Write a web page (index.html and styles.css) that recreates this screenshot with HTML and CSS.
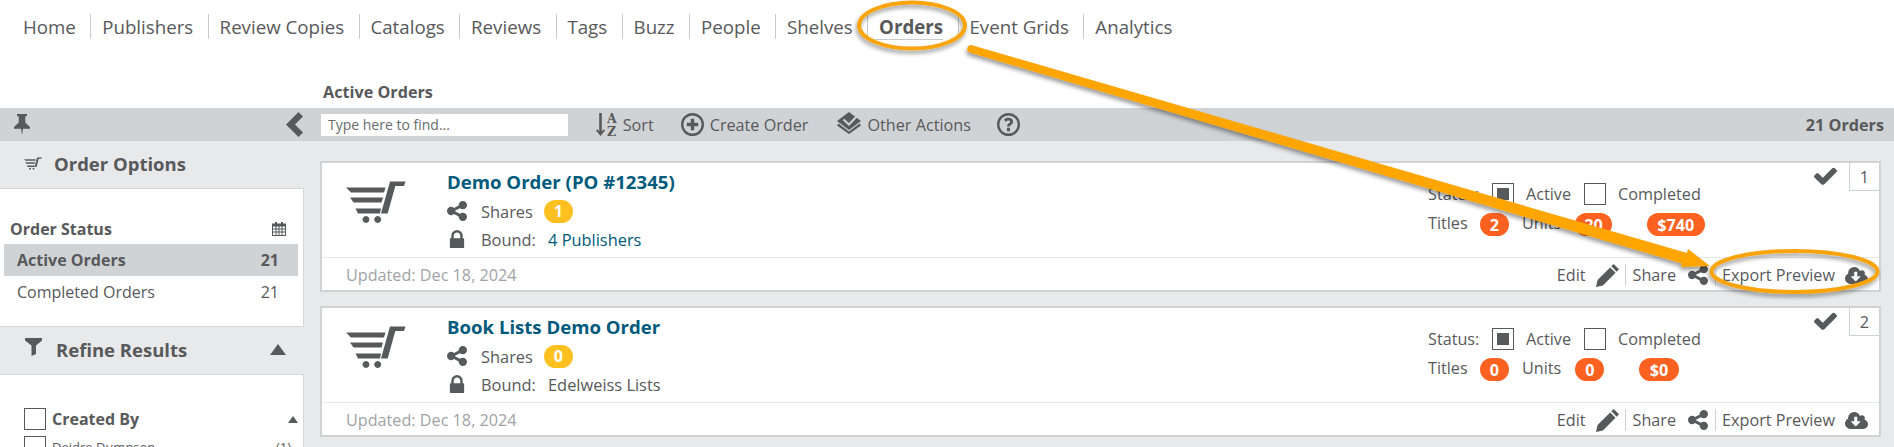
FILE: index.html
```html
<!DOCTYPE html>
<html lang="en">
<head>
<meta charset="utf-8">
<title>Orders</title>
<link rel="stylesheet" href="styles.css">
</head>
<body>
<svg width="0" height="0" class="defs">
  <defs>
    <symbol id="i-share" viewBox="0 128 1536 1536"><path d="M1216 1024q133 0 226.500 93.500t93.500 226.500-93.500 226.500-226.500 93.500-226.500-93.500-93.500-226.500q0-12 2-34l-360-180q-92 86-218 86-133 0-226.500-93.500t-93.500-226.500 93.500-226.500 226.500-93.500q126 0 218 86l360-180q-2-22-2-34 0-133 93.500-226.500t226.500-93.500 226.500 93.500 93.500 226.500-93.500 226.500-226.500 93.500q-126 0-218-86l-360 180q2 22 2 34t-2 34l360 180q92-86 218-86z"/></symbol>
    <symbol id="i-lock" viewBox="0 128 1152 1408"><path d="M320 768h512v-192q0-106-75-181t-181-75-181 75-75 181v192zm832 96v576q0 40-28 68t-68 28h-960q-40 0-68-28t-28-68v-576q0-40 28-68t68-28h32v-192q0-184 132-316t316-132 316 132 132 316v192h32q40 0 68 28t28 68z"/></symbol>
    <symbol id="i-cart" viewBox="0 0 60 42"><path d="M0 6.500h39.500l-1.500 5H5zM4 16.500h33l-1.500 5H7.500zM9.500 27.500H35l-1 5H12zM44 .5h15.500L58 5h-8.700L41.700 32.500H35zM20 35.100a3.400 3.400 0 1 1-.01 0zM31.700 35.100a3.400 3.400 0 1 1-.01 0z"/></symbol>
    <symbol id="i-check" viewBox="121 302 1550 1192"><path d="M1671 566q0 40-28 68l-724 724-136 136q-28 28-68 28t-68-28l-136-136-362-362q-28-28-28-68t28-68l136-136q28-28 68-28t68 28l294 295 656-657q28-28 68-28t68 28l136 136q28 28 28 68z"/></symbol>
    <symbol id="i-pencil" viewBox="0 0 24 24"><path d="M0 24l1.600-7.200L14.800 3.600l5.600 5.600L7.200 22.400zM16 2.400 18.400 0 24 5.600 21.600 8z"/></symbol>
    <symbol id="i-cloud" viewBox="0 128 1920 1408"><path d="M1280 928q0-14-9-23t-23-9h-224v-352q0-13-9.500-22.500t-22.500-9.500h-192q-13 0-22.500 9.500t-9.500 22.500v352h-224q-13 0-22.500 9.500t-9.500 22.500q0 14 9 23l352 352q9 9 23 9t23-9l351-352q10-12 10-24zm640 224q0 159-112.500 271.500t-271.500 112.500h-1088q-185 0-316.500-131.500t-131.500-316.500q0-130 70-240t188-165q-2-30-2-43 0-212 150-362t362-150q156 0 285.500 87t188.500 231q71-62 166-62 106 0 181 75t75 181q0 76-41 138 130 31 213.500 135.500t83.500 238.500z"/></symbol>
  </defs>
</svg>

<nav class="topnav">
  <a class="nav-item">Home</a>
  <a class="nav-item">Publishers</a>
  <a class="nav-item">Review Copies</a>
  <a class="nav-item">Catalogs</a>
  <a class="nav-item">Reviews</a>
  <a class="nav-item">Tags</a>
  <a class="nav-item">Buzz</a>
  <a class="nav-item">People</a>
  <a class="nav-item">Shelves</a>
  <a class="nav-item is-active"><span>Orders</span></a>
  <a class="nav-item">Event Grids</a>
  <a class="nav-item">Analytics</a>
</nav>

<div class="page-title">Active Orders</div>

<div class="toolbar">
  <div class="toolbar-left">
    <svg class="pin" viewBox="0 0 16 21"><path d="M3 0h10v2.200h-1.700V8.500L16 13v1.700H9L8 21l-1-6.300H0V13l4.700-4.500V2.200H3z"/></svg>
    <svg class="chevron" viewBox="0 0 17 25"><path d="M12.500 0 17 4.500 9 12.500l8 8L12.500 25 0 12.500z"/></svg>
  </div>
  <div class="toolbar-main">
    <input class="find" type="text" placeholder="Type here to find...">
    <span class="tool tool-sort">
      <svg class="ic-sort" viewBox="0 0 9 23"><path d="M3.200 0h2.600v18.300L7.800 16.200 9 17.400 4.500 23 0 17.400l1.200-1.200 2 2.100z"/></svg>
      <span class="az"><b>A</b><b>Z</b></span>
      <span>Sort</span>
    </span>
    <span class="tool tool-create">
      <svg class="ic-plus" viewBox="0 0 24 24"><path fill-rule="evenodd" d="M12 0a12 12 0 1 1 0 24 12 12 0 0 1 0-24zm0 2.500a9.500 9.500 0 1 0 0 19 9.500 9.500 0 0 0 0-19zM10.200 6h3.600v4.200H18v3.600h-4.200V18h-3.600v-4.200H6v-3.600h4.200z"/></svg>
      <span>Create Order</span>
    </span>
    <span class="tool tool-other">
      <svg class="ic-other" viewBox="0 0 24 22"><path d="M12 0l12 9-12 9L0 9z"/><path class="ic-other-check" d="M6.500 7.500l5.500 5L21 3"/><path d="M1.500 11.500 12 19.500 22.500 11.500 24 13.500 12 22 0 13.500z"/></svg>
      <span>Other Actions</span>
    </span>
    <svg class="ic-help" viewBox="0 0 24 24"><path fill-rule="evenodd" d="M12 0a12 12 0 1 1 0 24 12 12 0 0 1 0-24zm0 2.500a9.500 9.500 0 1 0 0 19 9.500 9.500 0 0 0 0-19zM12 5c3 0 4.800 1.700 4.800 4 0 2.900-3.300 3.200-3.300 5.200h-3c0-3.300 3.200-3.700 3.200-5.100 0-.8-.7-1.300-1.800-1.300-1 0-2 .5-2.800 1.400L7.300 7C8.500 5.700 10 5 12 5zm-1.600 10.500h3.200V19h-3.200z"/></svg>
    <span class="count">21 Orders</span>
  </div>
</div>

<div class="body-row">
  <aside class="sidebar">
    <div class="side-head head-options">
      <svg class="ic-sidecart" viewBox="0 0 60 42"><use href="#i-cart"/></svg>
      <span>Order Options</span>
    </div>
    <div class="panel panel-options">
      <div class="status-head"><b>Order Status</b>
        <svg class="ic-cal" viewBox="0 0 14 14"><path fill-rule="evenodd" d="M3 0h2v1.500h4V0h2v1.500h3V14H0V1.500h3zM1 4.500v2h2.500v-2zm3.500 0v2h2v-2zm3 0v2h2v-2zm3 0v2H13v-2zM1 7.500v2h2.500v-2zm3.500 0v2h2v-2zm3 0v2h2v-2zm3 0v2H13v-2zM1 10.500V13h2.500v-2.500zm3.500 0V13h2v-2.500zm3 0V13h2v-2.500zm3 0V13H13v-2.500z"/></svg>
      </div>
      <div class="status-row is-current"><span>Active Orders</span><span>21</span></div>
      <div class="status-row"><span>Completed Orders</span><span>21</span></div>
    </div>
    <div class="side-head head-refine">
      <svg class="ic-funnel" viewBox="0 0 17 18"><path d="M0 0h17v2.500L11 7.500V16l-4.500 2V7.500L0 2.500z"/></svg>
      <span>Refine Results</span>
      <i class="tri tri-lg"></i>
    </div>
    <div class="panel panel-refine">
      <div class="filter-head">
        <span class="box"></span><b>Created By</b><i class="tri tri-sm"></i>
      </div>
      <div class="filter-row"><span class="box"></span><span class="filter-name">Deidre Dumpson</span><span class="filter-num">(1)</span></div>
    </div>
  </aside>

  <main class="cards">
    <article class="card">
      <div class="card-top">
        <svg class="card-cart" viewBox="0 0 60 42"><use href="#i-cart"/></svg>
        <div class="card-info">
          <h2 class="card-title">Demo Order (PO #12345)</h2>
          <div class="info-row"><svg class="ic-share" viewBox="0 0 1536 1536"><use href="#i-share"/></svg><span class="lbl">Shares</span><span class="pill pill-amber">1</span></div>
          <div class="info-row"><svg class="ic-lock" viewBox="0 0 1152 1408"><use href="#i-lock"/></svg><span class="lbl lbl-bound">Bound:</span><a class="link">4 Publishers</a></div>
        </div>
        <div class="card-stats">
          <div class="stat-row">
            <span class="st-label">Status:</span><span class="box box-on"></span><span class="st-active">Active</span><span class="box"></span><span class="st-done">Completed</span>
          </div>
          <div class="stat-row stat-row-2">
            <span class="st-label st-titles">Titles</span><span class="pill pill-orange">2</span><span class="st-units">Units</span><span class="pill pill-orange">20</span><span class="pill pill-orange pill-money">$740</span>
          </div>
        </div>
        <div class="card-corner">
          <svg class="ic-check" viewBox="0 0 1550 1192"><use href="#i-check"/></svg><span class="num">1</span>
        </div>
      </div>
      <div class="card-foot">
        <span class="updated">Updated: Dec 18, 2024</span>
        <span class="act act-edit">Edit<svg class="ic-pencil" viewBox="0 0 24 24"><use href="#i-pencil"/></svg></span>
        <span class="act act-share">Share<svg class="ic-share" viewBox="0 0 1536 1536"><use href="#i-share"/></svg></span>
        <span class="act act-export">Export Preview<svg class="ic-cloud" viewBox="0 0 1920 1408"><use href="#i-cloud"/></svg></span>
      </div>
    </article>

    <article class="card">
      <div class="card-top">
        <svg class="card-cart" viewBox="0 0 60 42"><use href="#i-cart"/></svg>
        <div class="card-info">
          <h2 class="card-title">Book Lists Demo Order</h2>
          <div class="info-row"><svg class="ic-share" viewBox="0 0 1536 1536"><use href="#i-share"/></svg><span class="lbl">Shares</span><span class="pill pill-amber">0</span></div>
          <div class="info-row"><svg class="ic-lock" viewBox="0 0 1152 1408"><use href="#i-lock"/></svg><span class="lbl lbl-bound">Bound:</span><span class="plain">Edelweiss Lists</span></div>
        </div>
        <div class="card-stats">
          <div class="stat-row">
            <span class="st-label">Status:</span><span class="box box-on"></span><span class="st-active">Active</span><span class="box"></span><span class="st-done">Completed</span>
          </div>
          <div class="stat-row stat-row-2">
            <span class="st-label st-titles">Titles</span><span class="pill pill-orange">0</span><span class="st-units">Units</span><span class="pill pill-orange">0</span><span class="pill pill-orange pill-money">$0</span>
          </div>
        </div>
        <div class="card-corner">
          <svg class="ic-check" viewBox="0 0 1550 1192"><use href="#i-check"/></svg><span class="num">2</span>
        </div>
      </div>
      <div class="card-foot">
        <span class="updated">Updated: Dec 18, 2024</span>
        <span class="act act-edit">Edit<svg class="ic-pencil" viewBox="0 0 24 24"><use href="#i-pencil"/></svg></span>
        <span class="act act-share">Share<svg class="ic-share" viewBox="0 0 1536 1536"><use href="#i-share"/></svg></span>
        <span class="act act-export">Export Preview<svg class="ic-cloud" viewBox="0 0 1920 1408"><use href="#i-cloud"/></svg></span>
      </div>
    </article>
  </main>
</div>

<svg class="annotations" viewBox="0 0 1894 447" width="1894" height="447">
  <defs>
    <filter id="soft" x="-5%" y="-20%" width="110%" height="150%"><feDropShadow dx="-1" dy="3" stdDeviation="2" flood-color="#000" flood-opacity=".4"/></filter>
  </defs>
  <g filter="url(#soft)">
    <ellipse cx="912" cy="25.500" rx="53" ry="23" class="ring"/>
    <ellipse cx="1794.500" cy="271.500" rx="83" ry="20.500" class="ring"/>
    <path class="arrow" d="M973 45.500 1687 253l1-4 22 17-29 1 1-3.500L969.500 52.500a3.500 3.500 0 0 1 3.500-7z"/>
  </g>
</svg>
</body>
</html>
```

FILE: styles.css
```css
* { box-sizing: border-box; }
html, body { margin: 0; padding: 0; }
body {
  position: relative;
  width: 1894px;
  height: 447px;
  overflow: hidden;
  background: #e8e9eb;
  font-family: "Open Sans", "Noto Sans", sans-serif;
  color: #58595b;
}
.defs { position: absolute; }
svg { fill: #58595b; display: block; flex: none; }

/* top nav */
.topnav {
  display: flex;
  height: 78px;
  padding: 14px 0 0 0;
  background: #fff;
  align-items: flex-start;
}
.nav-item {
  height: 25px;
  padding: 0 14.500px 0 10.900px;
  font-size: 18.700px;
  line-height: 25px;
  color: #58595b;
  border-right: 1px solid #c9cbcd;
}
.nav-item:first-child { padding-left: 23px; }
.nav-item:last-child { border-right: 0; }
.nav-item.is-active { font-weight: 700; }
.nav-item.is-active span {
  display: block;
  height: 26px;
  margin-left: -4px;
  padding-left: 4px;
  border-bottom: 1px solid #c9cbcd;
}

.page-title {
  height: 30px;
  padding: 6px 0 0 323px;
  background: #fff;
  font-size: 16.200px;
  line-height: 16px;
  font-weight: 700;
}

/* toolbar */
.toolbar {
  display: flex;
  height: 33px;
  background: #d0d3d6;
  align-items: center;
}
.toolbar-left {
  display: flex;
  width: 321px;
  padding: 0 18px 0 14px;
  justify-content: space-between;
  align-items: center;
  flex: none;
}
.pin { width: 16px; height: 21px; }
.chevron { width: 17px; height: 25px; }
.toolbar-main {
  flex: 1;
  display: flex;
  align-items: center;
  padding-right: 10px;
}
.find {
  width: 247px;
  height: 22px;
  border: 0;
  margin-right: 28px;
  padding: 0 7px;
  background: #fff;
  font: 14px "Open Sans", sans-serif;
  color: #58595b;
  outline: 0;
}
.find::placeholder { color: #6a6b6d; opacity: 1; }
.tool {
  display: inline-flex;
  align-items: center;
  font-size: 16.200px;
  color: #58595b;
}
.tool-sort { margin-right: 27px; }
.tool-create { margin-right: 29px; gap: 6px; }
.tool-other { margin-right: 26px; gap: 6px; }
.ic-sort { width: 9px; height: 23px; }
.az { display: flex; flex-direction: column; margin: 0 6px 0 2px; font: 700 12.500px/13px "DejaVu Serif", serif; }
.az b { display: block; }
.ic-plus, .ic-help { width: 23px; height: 23px; }
.ic-other { width: 24px; height: 22px; margin-top: -3px; }
.ic-other-check { fill: none; stroke: #d0d3d6; stroke-width: 2px; }
.count { margin-left: auto; font-size: 16.200px; font-weight: 700; }

/* layout */
.body-row { display: flex; height: 306px; overflow: hidden; }

/* sidebar */
.sidebar { width: 320px; flex: none; }
.side-head {
  display: flex;
  align-items: center;
  font-weight: 700;
  font-size: 18.500px;
  color: #58595b;
}
.head-options { height: 47px; padding: 0 0 2px 24px; gap: 12px; }
.head-refine { height: 47px; padding: 0 0 2px 25px; gap: 14px; }
.ic-sidecart { width: 18px; height: 13px; }
.ic-funnel { width: 17px; height: 18px; margin-top: -6px; }
.tri { display: block; width: 0; height: 0; border-style: solid; border-color: transparent transparent #58595b; }
.tri-lg { border-width: 0 8.500px 11px; margin-left: 69px; }
.tri-sm { border-width: 0 5.500px 7px; margin-left: auto; }
.panel {
  width: 304px;
  background: #fff;
  border: 1px solid #d5d8da;
  border-left: 0;
}
.panel-options { height: 139px; padding: 26px 5px 0 4px; }
.status-head {
  display: flex;
  justify-content: space-between;
  align-items: center;
  height: 29px;
  padding: 0 12px 2px 6px;
  font-size: 16px;
}
.ic-cal { width: 14px; height: 14px; }
.status-row {
  display: flex;
  justify-content: space-between;
  height: 32px;
  padding: 0 19px 0 13px;
  font-size: 16px;
  line-height: 32px;
}
.status-row.is-current { background: #d0d3d6; font-weight: 700; }
.panel-refine { height: 120px; padding: 33px 5px 0 24px; }
.filter-head {
  display: flex;
  align-items: center;
  gap: 6px;
  font-size: 16px;
  height: 22px;
}
.filter-row {
  display: flex;
  align-items: center;
  gap: 6px;
  margin-top: 6px;
  font-size: 13px;
}
.filter-num { margin-left: auto; padding-right: 7px; }
.box {
  display: flex;
  width: 22px;
  height: 22px;
  flex: none;
  align-items: center;
  justify-content: center;
  background: #fff;
  border: 1px solid #58595b;
}
.box-on::after { content: ""; width: 12px; height: 12px; background: #58595b; }

/* cards */
.cards { flex: 1; padding: 20px 13px 0 0; display: flex; flex-direction: column; gap: 14px; }
.card {
  flex: none;
  height: 131px;
  background: #fff;
  border: 2px solid #d0d3d6;
  display: flex;
  flex-direction: column;
}
.card-top {
  position: relative;
  height: 95px;
  flex: none;
  display: flex;
  border-bottom: 1px solid #e8e9eb;
}
.card-cart { width: 60px; height: 42px; margin: 18px 0 0 24px; }
.card-info { margin-left: 41px; padding-top: 6px; width: 981px; flex: none; }
.card-title {
  margin: 0 0 2px;
  font-size: 18.600px;
  line-height: 26px;
  font-weight: 700;
  color: #005a7c;
}
.info-row {
  display: flex;
  align-items: center;
  height: 28px;
  font-size: 16.400px;
}
.ic-share { width: 20px; height: 20px; }
.ic-lock { width: 16px; height: 18px; margin: 0 2px 0 2px; }
.lbl { margin-left: 14px; width: 63px; }
.lbl-bound { width: 67px; }
.pill {
  display: inline-flex;
  align-items: center;
  justify-content: center;
  min-width: 29px;
  height: 23px;
  padding: 0 9px;
  border-radius: 12px;
  color: #fff;
  font-size: 16.200px;
  font-weight: 700;
  flex: none;
}
.pill-orange { background: #ff6120; }
.pill-amber { background: #ffc020; }
.link { color: #005a7c; }
.plain { color: #58595b; }
.card-stats { padding-top: 20px; font-size: 16.200px; }
.stat-row { display: flex; align-items: center; height: 22px; }
.stat-row-2 { height: 23px; margin-top: 8px; }
.st-label { width: 64px; }
.st-titles { width: 52px; padding-bottom: 4px; }
.st-active { margin: 0 13px 0 12px; }
.st-done { margin-left: 12px; }
.st-units { margin: 0 14px 0 13px; padding-bottom: 4px; }
.pill-money { margin-left: 35px; padding: 0 10.500px; }
.card-corner {
  position: absolute;
  top: 0;
  right: 0;
  display: flex;
  align-items: flex-start;
}
.ic-check { width: 23px; height: 18px; margin: 4px 12px 0 0; }
.num {
  width: 30px;
  height: 28px;
  text-align: center;
  font-size: 16.200px;
  line-height: 28px;
  border: 1px solid #d0d3d6;
  border-top: 0;
  border-right: 0;
}
.card-foot {
  height: 32px;
  display: flex;
  align-items: center;
  font-size: 16.200px;
  padding: 2px 11px 0 24px;
}
.updated { color: #9fa3a7; margin-right: auto; }
.act {
  display: inline-flex;
  align-items: center;
  height: 22px;
}
.act svg { margin-left: 10px; }
.act-edit { padding-right: 6px; border-right: 1px solid #d0d3d6; }
.act-share { padding: 0 7px; border-right: 1px solid #d0d3d6; }
.act-share svg { margin-left: 12px; }
.act-export { padding-left: 6px; }
.ic-pencil { width: 23px; height: 23px; }
.ic-cloud { width: 23px; height: 17px; }

/* annotation overlay */
.annotations {
  position: absolute;
  top: 0;
  left: 0;
  pointer-events: none;
}
.ring { fill: none; stroke: #f7a40e; stroke-width: 4px; }
.arrow { fill: #ffa500; }
```
